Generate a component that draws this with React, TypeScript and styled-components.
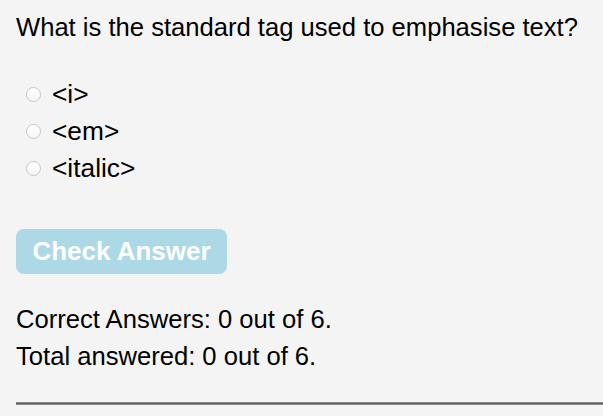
import React from "react";
import styled, { createGlobalStyle } from "styled-components";

const Global = createGlobalStyle`
  html, body { margin: 0; padding: 0; background: #f4f4f4; }
  body { font-family: "Liberation Sans", Arial, Helvetica, sans-serif; color: #000; }
`;

const Page = styled.div`
  padding: 12px 0 0 16px;
  display: flex;
  flex-direction: column;
`;

const Question = styled.h2`
  margin: 0;
  font-size: 25.6px;
  font-weight: 400;
  line-height: 30px;
  white-space: nowrap;
`;

const Options = styled.div`
  display: flex;
  flex-direction: column;
  margin-top: 33.5px;
  padding-left: 10px;
`;

const Option = styled.label`
  display: flex;
  align-items: center;
  gap: 11px;
  font-size: 26.3px;
  line-height: 37px;
  height: 37px;
`;

const Radio = styled.span`
  flex: none;
  width: 15px;
  height: 15px;
  border-radius: 50%;
  border: 1.5px solid #c6c6c6;
  background: linear-gradient(#ffffff, #f6f6f6);
  box-sizing: border-box;
`;

const Button = styled.button`
  margin-top: 42.5px;
  align-self: flex-start;
  width: 211px;
  height: 45px;
  border: none;
  border-radius: 8px;
  background: #add8e6;
  color: #fff;
  font-family: "Liberation Sans", Arial, sans-serif;
  font-weight: 700;
  font-size: 26px;
  padding: 0;
`;

const Stats = styled.div`
  margin-top: 27px;
  display: flex;
  flex-direction: column;
  font-size: 25.6px;
  line-height: 37px;
`;

const Rule = styled.hr`
  margin: 27px 0 0 0;
  border: none;
  border-top: 1px solid #8a8a8a;
  border-bottom: 1px solid #8a8a8a;
  background: #5e5e5e;
  height: 1px;
`;

export default function App() {
  const options = ["<i>", "<em>", "<italic>"];
  return (
    <>
      <Global />
      <Page>
        <Question>What is the standard tag used to emphasise text?</Question>
        <Options>
          {options.map((o) => (
            <Option key={o}>
              <Radio />
              {o}
            </Option>
          ))}
        </Options>
        <Button>Check Answer</Button>
        <Stats>
          <div>Correct Answers: 0 out of 6.</div>
          <div>Total answered: 0 out of 6.</div>
        </Stats>
        <Rule />
      </Page>
    </>
  );
}
